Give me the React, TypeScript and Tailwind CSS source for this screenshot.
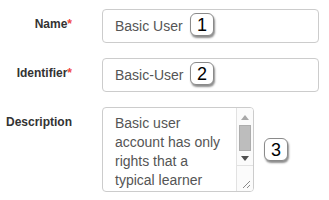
import React from 'react';

function Badge({ n }: { n: string }) {
  return (
    <div className="w-[24px] h-[23px] bg-white border border-[#8a8a8a] rounded-[6px] shadow-[1px_2px_2px_rgba(0,0,0,0.45)] flex items-center justify-center text-[18px] leading-none text-black">
      {n}
    </div>
  );
}

function Label({ text, required }: { text: string; required?: boolean }) {
  return (
    <div className="w-[72px] shrink-0 text-right pt-[7px] text-[12px] leading-[17px] font-bold text-[#333]">
      {text}
      {required && <span className="text-[#f0443c]">*</span>}
    </div>
  );
}

function TextInput({ value, badge }: { value: string; badge: string }) {
  return (
    <div className="relative ml-[30px] w-[217px] h-[34px] border border-[#ccc] rounded-[4px] px-3 py-[6px] text-[14px] leading-5 text-[#555] bg-white">
      {value}
      <div className="absolute left-[87px] top-[3px]">
        <Badge n={badge} />
      </div>
    </div>
  );
}

export default function App() {
  return (
    <div className="w-[329px] h-[200px] bg-white pt-[9px] font-['Liberation_Sans',Arial,sans-serif]">
      <div className="flex mb-[15px]">
        <Label text="Name" required />
        <TextInput value="Basic User" badge="1" />
      </div>

      <div className="flex mb-[15px]">
        <Label text="Identifier" required />
        <TextInput value="Basic-User" badge="2" />
      </div>

      <div className="flex">
        <Label text="Description" />
        <div className="flex items-center ml-[30px]">
          {/* textarea look-alike with its scrollbar */}
          <div className="w-[152px] h-[85px] border border-[#ccc] rounded-[4px] flex overflow-hidden bg-white">
            <div className="w-[133px] px-3 pt-[6px] text-[14px] leading-[19px] text-[#555]">
              Basic user account has only rights that a typical learner
            </div>
            <div className="w-[17px] flex flex-col border-l border-[#e2e2e2] bg-[#fbfbfb]">
              <div className="h-[17px] flex items-center justify-center pt-[2px]">
                <svg width="8" height="5" viewBox="0 0 8 5"><path d="M0 5 L4 0 L8 5 Z" fill="#a8a8a8" /></svg>
              </div>
              <div className="mx-[2px] h-[26px] bg-[#bdbdbd] border border-[#adadad]" />
              <div className="h-[14px] flex items-center justify-center">
                <svg width="8" height="5" viewBox="0 0 8 5"><path d="M0 0 L8 0 L4 5 Z" fill="#505050" /></svg>
              </div>
              <div className="flex-1 border-t border-[#e2e2e2] flex items-end justify-end p-[2px]">
                <svg width="9" height="9" viewBox="0 0 9 9">
                  <path d="M1 8 L8 1 M5 8 L8 5" stroke="#8a8a8a" strokeWidth="1" />
                </svg>
              </div>
            </div>
          </div>
          <div className="ml-[10px]">
            <Badge n="3" />
          </div>
        </div>
      </div>
    </div>
  );
}
